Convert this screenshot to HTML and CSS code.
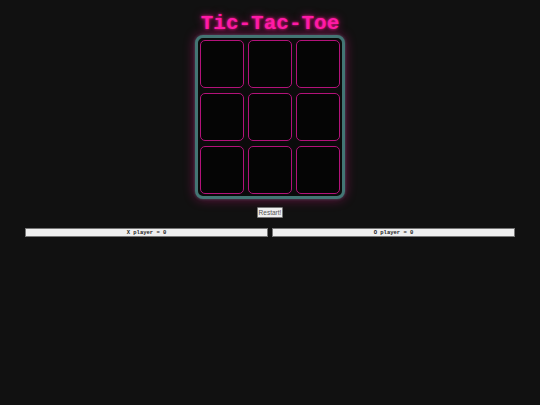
FILE: index.html
```html
<!DOCTYPE html>
<html>
<head>
<meta charset="utf-8">
<link rel="stylesheet" href="styles.css">
</head>
<body>
<h1 class="title">Tic-Tac-Toe</h1>
<div class="board">
  <div class="cell"></div><div class="cell"></div><div class="cell"></div>
  <div class="cell"></div><div class="cell"></div><div class="cell"></div>
  <div class="cell"></div><div class="cell"></div><div class="cell"></div>
</div>
<div class="controls"><button class="restart">Restart!</button></div>
<div class="scores">
  <div class="score">X player = 0</div>
  <div class="score">O player = 0</div>
</div>
</body>
</html>
```
FILE: styles.css
```css
html, body {
  margin: 0;
  padding: 0;
  background: #111111;
  height: 100%;
}
body {
  font-family: "Liberation Mono", monospace;
}
.title {
  margin: 12px 0 0;
  font-size: 21px;
  line-height: 24px;
  font-weight: bold;
  text-align: center;
  color: #ff1aa6;
  text-shadow: 0 0 3px #ff1493, 0 0 8px rgba(255, 20, 147, 0.55);
}
.board {
  box-sizing: border-box;
  width: 150px;
  margin: -1px auto 0;
  padding: 2px;
  border: 3px solid #437674;
  border-radius: 8px;
  background: #0b0b0b;
  box-shadow: 0 0 3px rgba(120, 200, 200, 0.35), 0 0 12px rgba(255, 20, 147, 0.4);
  display: grid;
  grid-template-columns: repeat(3, 44px);
  grid-template-rows: repeat(3, 48px);
  column-gap: 4px;
  row-gap: 5px;
}
.cell {
  box-sizing: border-box;
  border: 1px solid #b3127a;
  border-radius: 5px;
  background: #050505;
}
.controls {
  display: flex;
  justify-content: center;
  margin-top: 8px;
}
.restart {
  font-family: "Liberation Sans", sans-serif;
  font-size: 6.5px;
  line-height: 7px;
  padding: 1px 1px;
  color: #555;
  background: #efefef;
  border: 1px solid #767676;
  border-radius: 1px;
}
.scores {
  display: flex;
  gap: 4px;
  margin: 10px 25px 0;
}
.score {
  flex: 1;
  box-sizing: border-box;
  height: 9px;
  line-height: 7px;
  font-size: 5.5px;
  font-weight: bold;
  text-align: center;
  color: #222;
  background: #efefef;
  border: 1px solid #767676;
}
```
